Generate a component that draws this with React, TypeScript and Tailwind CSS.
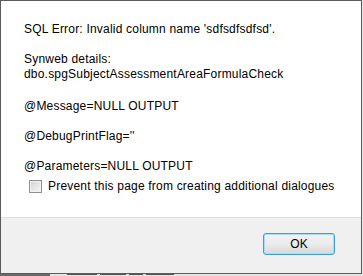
import React from "react";

/**
 * Browser alert dialog with SQL error message
 */

const lines: Array<{ text: string; className?: string }> = [
  { text: "SQL Error: Invalid column name 'sdfsdfsdfsd'." },
  { text: "\u00a0" },
  { text: "Synweb details:" },
  { text: "dbo.spgSubjectAssessmentAreaFormulaCheck" },
  { text: "\u00a0", className: "mb-[2px]" },
  { text: "@Message=NULL OUTPUT" },
  { text: "\u00a0" },
  { text: "@DebugPrintFlag=''" },
  { text: "\u00a0" },
  { text: "@Parameters=NULL OUTPUT" },
];

function Checkbox(): React.ReactNode {
  return (
    <div className="w-[13px] h-[13px] shrink-0 border border-[#8e8f8f] bg-linear-to-br from-[#d4d4d4] to-[#f7f7f7] shadow-[inset_0_0_0_1px_#f2f2f2]" />
  );
}

export default function App(): React.ReactNode {
  return (
    <div className="w-[363px] h-[276px] overflow-hidden bg-[#e4e4e4] font-['Liberation_Sans',Arial,sans-serif] text-[12px] tracking-[0.2px] text-black">
      <div className="w-[362px] h-[274px] border border-[#5b5b5b] bg-white flex flex-col">
        {/* Message body */}
        <div className="h-[217px] shrink-0 border-b border-[#dfdfdf] pt-[21px] pl-[23px]">
          {lines.map((line, i) => (
            <div key={i} className={`leading-[15px] whitespace-pre ${line.className ?? ""}`}>
              {line.text}
            </div>
          ))}
          <div className="mt-[5px] h-[15px] flex items-center gap-[6px] ml-[5px] leading-[15px]">
            <Checkbox />
            <span>Prevent this page from creating additional dialogues</span>
          </div>
        </div>

        {/* Footer */}
        <div className="flex-1 bg-[#f0f0f0] flex justify-end items-start pt-[15px] pr-[26px]">
          <button className="w-[72px] h-[22px] rounded-[3px] border border-[#3c9fdb] shadow-[inset_0_0_0_1px_#a6defa] bg-linear-to-b from-[#f3f3f3] via-[#ebebeb] to-[#d8d8d8] leading-[20px] text-[12px] text-black">
            OK
          </button>
        </div>
      </div>

      {/* page behind the dialog */}
      <div className="h-[2px] flex items-start">
        <div className="w-[50px] h-[2px] bg-[#6a6a6a]" />
        <div className="ml-[17px] flex gap-[3px]">
          <div className="w-[30px] h-[1px] bg-[#555]" />
          <div className="w-[26px] h-[1px] bg-[#555]" />
          <div className="w-[14px] h-[1px] bg-[#555]" />
          <div className="w-[28px] h-[1px] bg-[#555]" />
        </div>
      </div>
    </div>
  );
}
